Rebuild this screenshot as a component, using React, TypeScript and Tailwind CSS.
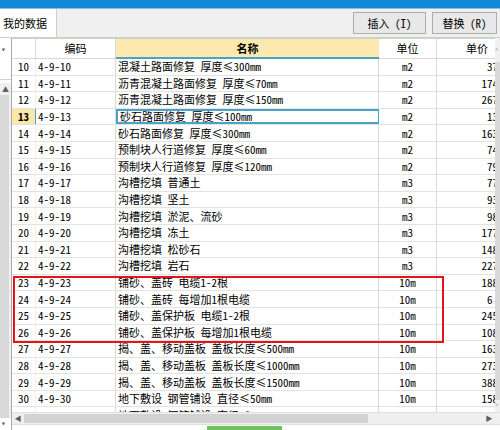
import React from 'react';

type Row = { no: number; code: string; name: string; unit: string; price: string };

const rows: Row[] = [
  { no: 10, code: '4-9-10', name: '混凝土路面修复 厚度≤300mm', unit: 'm2', price: '37' },
  { no: 11, code: '4-9-11', name: '沥青混凝土路面修复 厚度≤70mm', unit: 'm2', price: '174' },
  { no: 12, code: '4-9-12', name: '沥青混凝土路面修复 厚度≤150mm', unit: 'm2', price: '267' },
  { no: 13, code: '4-9-13', name: '砂石路面修复 厚度≤100mm', unit: 'm2', price: '13' },
  { no: 14, code: '4-9-14', name: '砂石路面修复 厚度≤300mm', unit: 'm2', price: '163' },
  { no: 15, code: '4-9-15', name: '预制块人行道修复 厚度≤60mm', unit: 'm2', price: '74' },
  { no: 16, code: '4-9-16', name: '预制块人行道修复 厚度≤120mm', unit: 'm2', price: '79' },
  { no: 17, code: '4-9-17', name: '沟槽挖填 普通土', unit: 'm3', price: '77' },
  { no: 18, code: '4-9-18', name: '沟槽挖填 坚土', unit: 'm3', price: '93' },
  { no: 19, code: '4-9-19', name: '沟槽挖填 淤泥、流砂', unit: 'm3', price: '98' },
  { no: 20, code: '4-9-20', name: '沟槽挖填 冻土', unit: 'm3', price: '177' },
  { no: 21, code: '4-9-21', name: '沟槽挖填 松砂石', unit: 'm3', price: '148' },
  { no: 22, code: '4-9-22', name: '沟槽挖填 岩石', unit: 'm3', price: '227' },
  { no: 23, code: '4-9-23', name: '铺砂、盖砖 电缆1-2根', unit: '10m', price: '188' },
  { no: 24, code: '4-9-24', name: '铺砂、盖砖 每增加1根电缆', unit: '10m', price: '6 ' },
  { no: 25, code: '4-9-25', name: '铺砂、盖保护板 电缆1-2根', unit: '10m', price: '245' },
  { no: 26, code: '4-9-26', name: '铺砂、盖保护板 每增加1根电缆', unit: '10m', price: '108' },
  { no: 27, code: '4-9-27', name: '揭、盖、移动盖板 盖板长度≤500mm', unit: '10m', price: '163' },
  { no: 28, code: '4-9-28', name: '揭、盖、移动盖板 盖板长度≤1000mm', unit: '10m', price: '273' },
  { no: 29, code: '4-9-29', name: '揭、盖、移动盖板 盖板长度≤1500mm', unit: '10m', price: '388' },
  { no: 30, code: '4-9-30', name: '地下敷设 钢管铺设 直径≤50mm', unit: '10m', price: '158' },
  { no: 31, code: '4-9-31', name: '地下敷设 钢管铺设 直径≤100mm', unit: '10m', price: '201' },
];

function GridRow({ r }: { r: Row }) {
  const active = r.no === 13;
  return (
    <div className="flex h-[16.6px] shrink-0 border-b border-[#e3e3e3]">
      <div
        className={`w-[24px] flex items-center pl-[6px] border-r ${
          active ? 'bg-[#fde7a6] font-bold border-[#4a9fc8]' : 'border-[#f0f0f0]'
        }`}
      >
        {r.no}
      </div>
      <div className="w-[80px] flex items-center pl-[2px] border-r border-[#d9d9d9]">{r.code}</div>
      <div
        className={`w-[263px] flex items-center pl-[2px] whitespace-nowrap overflow-hidden border-r ${
          active ? 'border-2 border-[#4aa2c6] pl-[1px]' : 'border-[#d9d9d9]'
        }`}
      >
        {r.name}
      </div>
      <div className="w-[58px] flex items-center justify-center border-r border-[#d9d9d9]">{r.unit}</div>
      <div className="flex-1 flex items-center justify-end overflow-hidden">
        <span className="-mr-[3px] whitespace-pre">{r.price}</span>
      </div>
    </div>
  );
}

export default function App() {
  return (
    <div className="w-[500px] h-[430px] overflow-hidden bg-[#f0f0f0] text-black text-[11px] leading-none font-['Noto_Sans_Mono_CJK_SC','Noto_Sans_CJK_SC',monospace]">
      {/* title strip */}
      <div className="h-[9px] bg-[#1189d6] border-b border-[#7cc3ec]" />

      {/* tab bar + actions */}
      <div className="flex h-[29px] bg-[#f0f0f0] border-b border-[#c6d6bd]">
        <div className="w-[57px] bg-white border-r border-[#c6d6bd] flex items-center pl-[3px]">我的数据</div>
        <div className="flex-1" />
        <div className="flex gap-[6px] pt-[3px] pr-[3px]">
          <button className="h-[22px] w-[73px] border border-[#adadad] bg-[#e8e8e8] flex items-center justify-center">
            插入 (I)
          </button>
          <button className="h-[22px] w-[65px] border border-[#adadad] bg-[#e8e8e8] flex items-center justify-center">
            替换 (R)
          </button>
        </div>
      </div>

      <div className="flex h-[392px]">
        {/* left tree panel edge */}
        <div className="w-[12px] flex flex-col bg-white border-r border-[#a9a9a9]">
          <div className="h-[42px] border-b border-[#d0d0d0] pt-[7px] pl-[1px] text-[8px] text-[#555]">▾</div>
          <div className="flex-1 flex flex-col bg-[#f0f0f0] mt-[3px]">
            <div className="h-[12px] flex items-center justify-center text-[7px] text-[#606060]">▲</div>
            <div className="flex-1 bg-[#d9d9d9] mr-[2px]" />
          </div>
          <div className="h-[12px] bg-white text-[8px] text-[#555] pl-[1px] pt-[1px]">▾</div>
        </div>

        {/* grid */}
        <div className="flex-1 flex flex-col bg-white">
          <div className="flex h-[374px]">
            <div className="flex-1 flex flex-col overflow-hidden relative">
              {/* header */}
              <div className="flex h-[21px] shrink-0 border-t border-[#d0d0d0]">
                <div className="w-[24px] border-r border-b border-[#d8d8d8]" />
                <div className="w-[80px] flex items-center justify-center border-r border-b border-[#d8d8d8]">编码</div>
                <div className="w-[263px] flex items-center justify-center bg-[#fde9ad] font-bold border-b-2 border-[#4aa2c6]">
                  名称
                </div>
                <div className="w-[58px] flex items-center justify-center border-r border-b border-[#d8d8d8]">单位</div>
                <div className="flex-1 flex items-center justify-end pr-[7px] border-b border-[#d8d8d8]">单价</div>
              </div>
              {rows.map((r) => (
                <GridRow key={r.no} r={r} />
              ))}
              {/* highlighted group */}
              <div className="absolute left-[1px] top-[238px] w-[431px] h-[67px] border-2 border-[#e5141b] pointer-events-none" />
            </div>
            {/* vertical scrollbar (cut by window) */}
            <div className="w-[5px] flex flex-col bg-[#f0f0f0]">
              <div className="h-[22px] pt-[9px] text-[6px] text-[#606060]">˄</div>
              <div className="flex-1 bg-[#dadada] my-[2px]" />
              <div className="h-[10px] text-[6px] text-[#606060]">˅</div>
            </div>
          </div>

          {/* horizontal scrollbar */}
          <div className="flex h-[13px] bg-[#efefef] border-y border-[#e0e0e0]">
            <div className="w-[12px] flex items-center justify-center text-[7px] text-[#606060]">◀</div>
            <div className="w-[344px] bg-[#d2d2d2] my-[1px]" />
            <div className="flex-1" />
            <div className="w-[12px] flex items-center justify-center text-[7px] text-[#606060]">▶</div>
            <div className="w-[5px] bg-[#f0f0f0]" />
          </div>

          {/* status strip */}
          <div className="flex-1 flex bg-white pt-[1px]">
            <div className="w-[195px]" />
            <div className="w-[75px] bg-[#6cc35c]" />
          </div>
        </div>
      </div>
    </div>
  );
}
